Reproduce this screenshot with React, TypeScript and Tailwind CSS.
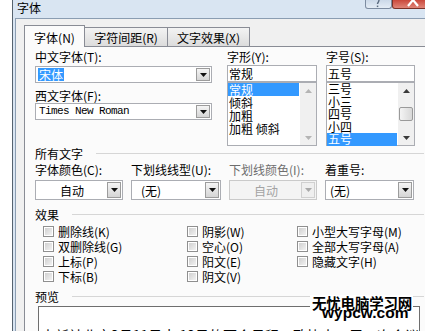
import clsx from "clsx";

const CJK = "font-['Noto_Sans_CJK_SC',sans-serif]";

const Tri = ({ up = false, color = "#000" }: { up?: boolean; color?: string }) => (
  <svg width="7" height="4" viewBox="0 0 7 4" className="block">
    <path d={up ? "M0 4 3.5 0 7 4Z" : "M0 0H7L3.5 4Z"} fill={color} />
  </svg>
);

const DropButton = ({ disabled }: { disabled?: boolean }) => (
  <div
    className={clsx(
      "flex w-[14px] shrink-0 items-center justify-center border",
      disabled
        ? "border-[#d0d0d0] bg-[#efefef]"
        : "border-[#9c9c9c] bg-linear-to-b from-[#f5f5f5] to-[#d5d5d5]"
    )}
  >
    <Tri color={disabled ? "#a9a9a9" : "#111"} />
  </div>
);

const Combo = ({
  children,
  className,
  textClass,
  disabled,
}: {
  children: React.ReactNode;
  className?: string;
  textClass?: string;
  disabled?: boolean;
}) => (
  <div
    className={clsx(
      "flex border p-[1px]",
      disabled ? "border-[#cacaca] bg-[#f4f4f4] text-[#a3a3a3]" : "border-[#abadb3] bg-white",
      className
    )}
  >
    <div className={clsx("flex min-w-0 flex-1 items-center whitespace-nowrap", textClass)}>{children}</div>
    <DropButton disabled={disabled} />
  </div>
);

const ScrollBar = ({ thumb, disabled }: { thumb?: boolean; disabled?: boolean }) => {
  const c = disabled ? "#b4b4b4" : "#3a3a3a";
  return (
    <div className="flex w-[16px] shrink-0 flex-col bg-[#f0f0f0]">
      <div className="flex h-[15px] items-center justify-center">
        <Tri up color={c} />
      </div>
      <div className="flex-1">
        {thumb && (
          <div className="mx-[1px] mt-[9px] h-[14px] rounded-[2px] border border-[#9a9a9a] bg-linear-to-r from-[#f4f4f4] to-[#d8d8d8]" />
        )}
      </div>
      <div className="flex h-[15px] items-center justify-center">
        <Tri color={c} />
      </div>
    </div>
  );
};

const Group = ({ title, className }: { title: string; className?: string }) => (
  <div className={clsx("flex h-[13px] items-center", className)}>
    <span>{title}</span>
    <span className="ml-[13px] h-px flex-1 bg-[#d6d6d6]" />
  </div>
);

const Check = ({ label }: { label: string }) => (
  <div className="flex h-[15px] items-center gap-[4px]">
    <span className="size-[11px] shrink-0 border border-[#8f8f8f] bg-white p-[1px]">
      <span className="block size-full bg-linear-to-br from-[#d0d0d0] to-[#f2f2f2]" />
    </span>
    <span className="whitespace-nowrap">{label}</span>
  </div>
);

const styles = ["常规", "倾斜", "加粗", "加粗 倾斜"];
const sizes = ["三号", "小三", "四号", "小四", "五号"];

export default function App() {
  return (
    <div className={clsx("relative flex h-[331px] w-[425px] overflow-hidden bg-white text-[12px] leading-[13px] text-black", CJK)}>
      <div className="w-[12px] shrink-0 bg-white" />
      <div className="flex flex-1 flex-col border-l border-[#56636f] bg-[#d9e5f2] pl-[2px]">
        {/* title bar */}
        <div className="flex h-[18px] shrink-0 items-start">
          <span className="ml-[2px] mt-[1px]">字体</span>
          <div className="ml-auto mr-[2px] flex">
            <div className="flex h-[9px] w-[27px] items-end justify-center rounded-b-[3px] border border-t-0 border-[#7d8ca1] bg-linear-to-b from-[#cbd8e8] to-[#e4ecf5]">
              <svg width="8" height="8" viewBox="0 0 8 8" className="block">
                <path d="M5 0C5 2 3.5 2.5 3.5 4" stroke="#5a6a7e" strokeWidth="1.4" fill="none" />
                <rect x="2.8" y="5.6" width="1.5" height="1.5" fill="#5a6a7e" />
              </svg>
            </div>
            <div className="flex h-[9px] w-[40px] items-end justify-center rounded-b-[3px] border border-t-0 border-[#7a3127] bg-linear-to-b from-[#c9473b] to-[#e08478]">
              <svg width="16" height="8" viewBox="0 0 16 8" className="block">
                <path d="M9 0 4 6M9 0 14 6" stroke="#fff" strokeWidth="2.2" fill="none" />
              </svg>
            </div>
          </div>
        </div>

        {/* dialog body */}
        <div className="flex flex-1 flex-col border-l border-t border-[#8b9db2] bg-[#f0f0f0] pl-[8px] pr-[3px] pt-[6px]">
          {/* tabs */}
          <div className="relative z-10 -mb-px flex items-end">
            <div className="flex h-[22px] w-[61px] items-start justify-center border border-b-0 border-[#898c95] bg-[#fbfbfb] pt-[5px]">
              字体(N)
            </div>
            <div className="mb-px flex h-[19px] w-[83px] items-center justify-center border border-b-0 border-l-0 border-[#898c95] bg-linear-to-b from-[#f3f3f3] to-[#dcdcdc]">
              字符间距(R)
            </div>
            <div className="mb-px flex h-[19px] w-[82px] items-center justify-center border border-b-0 border-l-0 border-[#898c95] bg-linear-to-b from-[#f3f3f3] to-[#dcdcdc]">
              文字效果(X)
            </div>
          </div>

          {/* tab panel */}
          <div className="flex h-[320px] flex-col border border-[#898c95] bg-[#fbfbfb] pl-[10px] pr-[6px] pt-[3px]">
            <div className="flex">
              <div className="flex w-[177px] flex-col">
                <div>中文字体(T):</div>
                <Combo className="mt-[3px] h-[17px]" textClass="pl-[1px]">
                  <span className="bg-[#3399ff] px-[1px] text-white">宋体</span>
                </Combo>
                <div className="mt-[6px]">西文字体(F):</div>
                <Combo className="mt-[1px] h-[17px]" textClass="pl-[2px]">
                  <span className="font-['Liberation_Mono',monospace] text-[11px] tracking-[-0.6px]">Times New Roman</span>
                </Combo>
              </div>

              <div className="ml-[15px] flex w-[90px] flex-col">
                <div>字形(Y):</div>
                <div className="mt-[2px] flex h-[17px] items-center border border-[#abadb3] bg-white pl-[1px]">常规</div>
                <div className="flex h-[64px] border border-[#abadb3] bg-white">
                  <div className="flex-1">
                    {styles.map((s, i) => (
                      <div
                        key={s}
                        className={clsx("h-[13px] whitespace-pre pl-[1px]", i === 0 && "mr-[1px] bg-[#3399ff] text-white")}
                      >
                        {s}
                      </div>
                    ))}
                  </div>
                  <ScrollBar disabled />
                </div>
              </div>

              <div className="ml-[9px] flex w-[89px] flex-col">
                <div>字号(S):</div>
                <div className="mt-[2px] flex h-[17px] items-center border border-[#abadb3] bg-white pl-[1px]">五号</div>
                <div className="flex h-[64px] border border-[#abadb3] bg-white">
                  <div className="flex-1">
                    {sizes.map((s, i) => (
                      <div
                        key={s}
                        className={clsx(
                          "h-[12.5px] pl-[1px] leading-[12.5px]",
                          i === sizes.length - 1 && "mr-[1px] bg-[#3399ff] text-white"
                        )}
                      >
                        {s}
                      </div>
                    ))}
                  </div>
                  <ScrollBar thumb />
                </div>
              </div>
            </div>

            <Group title="所有文字" className="mt-[1px]" />

            <div className="mt-[3px] grid grid-cols-[88px_90px_88px_89px] gap-x-[8px]">
              <div className="whitespace-nowrap">字体颜色(C):</div>
              <div className="whitespace-nowrap">下划线线型(U):</div>
              <div className="whitespace-nowrap text-[#6d6d6d]">下划线颜色(I):</div>
              <div className="whitespace-nowrap">着重号:</div>
              <Combo className="mt-[4px] h-[20px]" textClass="justify-center">
                自动
              </Combo>
              <Combo className="mt-[4px] h-[20px]" textClass="pl-[8px]">
                (无)
              </Combo>
              <Combo className="mt-[4px] h-[20px]" textClass="justify-center" disabled>
                自动
              </Combo>
              <Combo className="mt-[4px] h-[20px]" textClass="pl-[3px]">
                (无)
              </Combo>
            </div>

            <Group title="效果" className="mt-[8px]" />

            <div className="mt-[3px] grid grid-cols-[144px_110px_1fr] pl-[8px]">
              <div className="flex flex-col">
                <Check label="删除线(K)" />
                <Check label="双删除线(G)" />
                <Check label="上标(P)" />
                <Check label="下标(B)" />
              </div>
              <div className="flex flex-col">
                <Check label="阴影(W)" />
                <Check label="空心(O)" />
                <Check label="阳文(E)" />
                <Check label="阴文(V)" />
              </div>
              <div className="flex flex-col">
                <Check label="小型大写字母(M)" />
                <Check label="全部大写字母(A)" />
                <Check label="隐藏文字(H)" />
              </div>
            </div>

            <Group title="预览" className="mt-[6px]" />

            <div className="ml-[3px] mr-[4px] mt-[3px] h-[80px] overflow-hidden whitespace-nowrap border border-[#6e6e6e] bg-white pl-[2px] pt-[20px] text-[14px] leading-[16px]">
              中新社北京3月11日电 12日的两会日程，政协十三届一次会议
            </div>
          </div>
        </div>
      </div>

      {/* site watermark */}
      <div className="absolute left-[310px] top-[295px] flex flex-col">
        <div className="bg-white pl-[2px] pr-[1px] text-[14.5px] font-bold leading-[15px] tracking-[-0.2px]">无忧电脑学习网</div>
        <div className="-mt-[5px] ml-[12px] font-['Liberation_Sans',sans-serif] text-[15.5px] font-bold leading-[15px]">wypcw.com</div>
      </div>
    </div>
  );
}
